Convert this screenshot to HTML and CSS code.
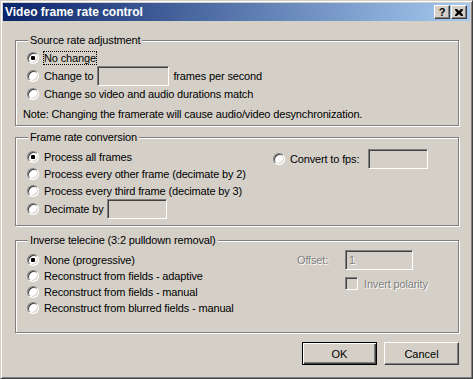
FILE: index.html
```html
<!DOCTYPE html>
<html lang="en">
<head>
    <meta charset="UTF-8">
    <meta name="viewport" content="width=device-width, initial-scale=1.0">
    <title>Video frame rate control</title>
    <link rel="stylesheet" href="styles.css">
</head>
<body>
    <div class="window">
        <!-- Title bar -->
        <div class="titlebar">
            <span class="title">Video frame rate control</span>
            <div class="caption-buttons">
                <span class="cap-btn help">?</span>
                <span class="cap-btn close">
                    <svg width="8" height="7" viewBox="0 0 8 7"><path d="M0 0h2l2 2 2-2h2v1L6 3.5 8 6v1H6L4 5 2 7H0V6l2-2.5L0 1z" fill="#000"/></svg>
                </span>
            </div>
        </div>

        <div class="content">
            <!-- Source rate -->
            <fieldset class="group group-source">
                <legend>Source rate adjustment</legend>
                <label class="row"><input type="radio" name="src" checked><span class="focus">No change</span></label>
                <label class="row"><input type="radio" name="src"><span>Change to</span><input type="text" class="field field-rate" disabled><span>frames per second</span></label>
                <label class="row"><input type="radio" name="src"><span>Change so video and audio durations match</span></label>
                <p class="note">Note: Changing the framerate will cause audio/video desynchronization.</p>
            </fieldset>

            <!-- Frame rate conversion -->
            <fieldset class="group group-convert">
                <legend>Frame rate conversion</legend>
                <div class="convert-grid">
                    <div class="col">
                        <label class="row"><input type="radio" name="conv" checked><span>Process all frames</span></label>
                        <label class="row"><input type="radio" name="conv"><span>Process every other frame (decimate by 2)</span></label>
                        <label class="row"><input type="radio" name="conv"><span>Process every third frame (decimate by 3)</span></label>
                        <label class="row row-input"><input type="radio" name="conv"><span>Decimate by</span><input type="text" class="field field-small" disabled></label>
                    </div>
                    <label class="row row-input fps"><input type="radio" name="conv"><span>Convert to fps:</span><input type="text" class="field field-small" disabled></label>
                </div>
            </fieldset>

            <!-- Inverse telecine -->
            <fieldset class="group group-ivtc">
                <legend>Inverse telecine (3:2 pulldown removal)</legend>
                <div class="ivtc-grid">
                    <div class="col">
                        <label class="row"><input type="radio" name="ivtc" checked><span>None (progressive)</span></label>
                        <label class="row"><input type="radio" name="ivtc"><span>Reconstruct from fields - adaptive</span></label>
                        <label class="row"><input type="radio" name="ivtc"><span>Reconstruct from fields - manual</span></label>
                        <label class="row"><input type="radio" name="ivtc"><span>Reconstruct from blurred fields - manual</span></label>
                    </div>
                    <div class="offset-grid">
                        <span class="disabled">Offset:</span>
                        <input type="text" class="field field-offset" value="1" disabled>
                        <label class="check-row"><input type="checkbox" disabled><span class="disabled">Invert polarity</span></label>
                    </div>
                </div>
            </fieldset>

            <div class="footer">
                <button class="btn btn-default">OK</button>
                <button class="btn">Cancel</button>
            </div>
        </div>
    </div>
</body>
</html>
```

FILE: styles.css
```css
body {
    margin: 0;
    font-family: "Liberation Sans", Arial, sans-serif;
    font-size: 11px;
    letter-spacing: -0.15px;
    color: #000;
    background-color: #d4d0c8;
}
.window {
    width: 473px;
    height: 379px;
    box-sizing: border-box;
    background-color: #d4d0c8;
    border: 1px solid;
    border-color: #d4d0c8 #404040 #404040 #d4d0c8;
    box-shadow: inset 1px 1px #fff, inset -1px -1px #808080;
    padding: 2px;
}

/* Title bar */
.titlebar {
    height: 18px;
    display: flex;
    align-items: center;
    justify-content: space-between;
    background: linear-gradient(to right, #0a246a, #a6caf0);
    padding-left: 2px;
}
.title {
    color: #fff;
    font-weight: bold;
    font-size: 12px;
    letter-spacing: 0;
}
.caption-buttons {
    display: flex;
    gap: 1px;
    margin-right: 3px;
}
.cap-btn {
    width: 16px;
    height: 14px;
    box-sizing: border-box;
    display: flex;
    align-items: center;
    justify-content: center;
    background-color: #d4d0c8;
    border: 1px solid;
    border-color: #fff #404040 #404040 #fff;
    box-shadow: inset -1px -1px #808080;
    font-weight: bold;
    font-size: 11px;
    line-height: 1;
}

/* Dialog body */
.content {
    padding: 13px 11px 0 12px;
}
.group {
    margin: 0;
    padding: 2px 7px;
    min-inline-size: 0;
    border: 1px solid #808080;
    box-shadow: inset 1px 1px #fff, 1px 1px #fff;
}
.group legend {
    margin-left: 5px;
    padding: 0 2px;
    line-height: 13px;
    background-color: #d4d0c8;
}
.group-convert {
    margin-top: 5px;
    padding-top: 4px;
    padding-bottom: 6px;
}
.group-ivtc {
    margin-top: 8px;
    padding-top: 5px;
    padding-bottom: 16px;
}

.row {
    display: flex;
    align-items: center;
    height: 18px;
    margin-left: 4px;
    white-space: nowrap;
}
.group-convert .row {
    height: 17px;
}
.group-convert .row-input {
    height: 20px;
}
.group-ivtc .row {
    height: 16px;
}
.focus {
    outline: 1px dotted #000;
    outline-offset: 0;
}
.note {
    margin: 2px 0 0;
    line-height: 18px;
}

/* Radio buttons */
input[type="radio"] {
    appearance: none;
    width: 12px;
    height: 12px;
    box-sizing: border-box;
    margin: 0 5px 0 0;
    flex-shrink: 0;
    border-radius: 50%;
    background-color: #fff;
    border: 1px solid;
    border-color: #808080 #fff #fff #808080;
    box-shadow: inset 1px 1px #404040, inset -1px -1px #d4d0c8;
}
input[type="radio"]:checked {
    background: radial-gradient(circle, #000 0 2px, #fff 2.5px);
}

/* Checkbox */
input[type="checkbox"] {
    appearance: none;
    width: 13px;
    height: 13px;
    box-sizing: border-box;
    margin: 0 6px 0 0;
    background-color: #d4d0c8;
    border: 1px solid;
    border-color: #808080 #fff #fff #808080;
    box-shadow: inset 1px 1px #404040, inset -1px -1px #d4d0c8;
}

/* Text fields */
.field {
    height: 20px;
    box-sizing: border-box;
    margin: 0 4px 0 4px;
    padding: 0 3px;
    font-family: inherit;
    font-size: 11px;
    background-color: #d4d0c8;
    border: 1px solid;
    border-color: #808080 #fff #fff #808080;
    box-shadow: inset 1px 1px #404040, inset -1px -1px #d4d0c8;
}
.field:disabled {
    color: #808080;
    text-shadow: 1px 1px #fff;
}
.field-rate {
    width: 72px;
}
.field-small {
    width: 60px;
}
.field-offset {
    width: 68px;
    margin: 0;
}
.disabled {
    color: #808080;
    text-shadow: 1px 1px #fff;
}

/* Frame rate conversion columns */
.convert-grid {
    display: grid;
    grid-template-columns: 246px auto;
    align-items: start;
}
.fps {
    margin-top: 1px;
}
.fps .field {
    margin-left: 9px;
}

/* Inverse telecine columns */
.ivtc-grid {
    display: grid;
    grid-template-columns: 274px auto;
    align-items: start;
}
.offset-grid {
    display: grid;
    grid-template-columns: 48px auto;
    margin-top: -2px;
}
.offset-grid > .disabled {
    align-self: center;
}
.check-row {
    grid-column: 2;
    display: flex;
    align-items: center;
    height: 17px;
    margin-top: 5px;
}

/* Buttons */
.footer {
    display: flex;
    justify-content: flex-end;
    gap: 7px;
    margin-top: 9px;
}
.btn {
    width: 75px;
    height: 23px;
    box-sizing: border-box;
    padding: 0;
    font-family: inherit;
    font-size: 11px;
    color: #000;
    background-color: #d4d0c8;
    border: 1px solid;
    border-color: #fff #404040 #404040 #fff;
    box-shadow: inset -1px -1px #808080;
}
.btn-default {
    border: 1px solid #000;
    box-shadow: inset 1px 1px #fff, inset -1px -1px #404040, inset -2px -2px #808080;
}
```
